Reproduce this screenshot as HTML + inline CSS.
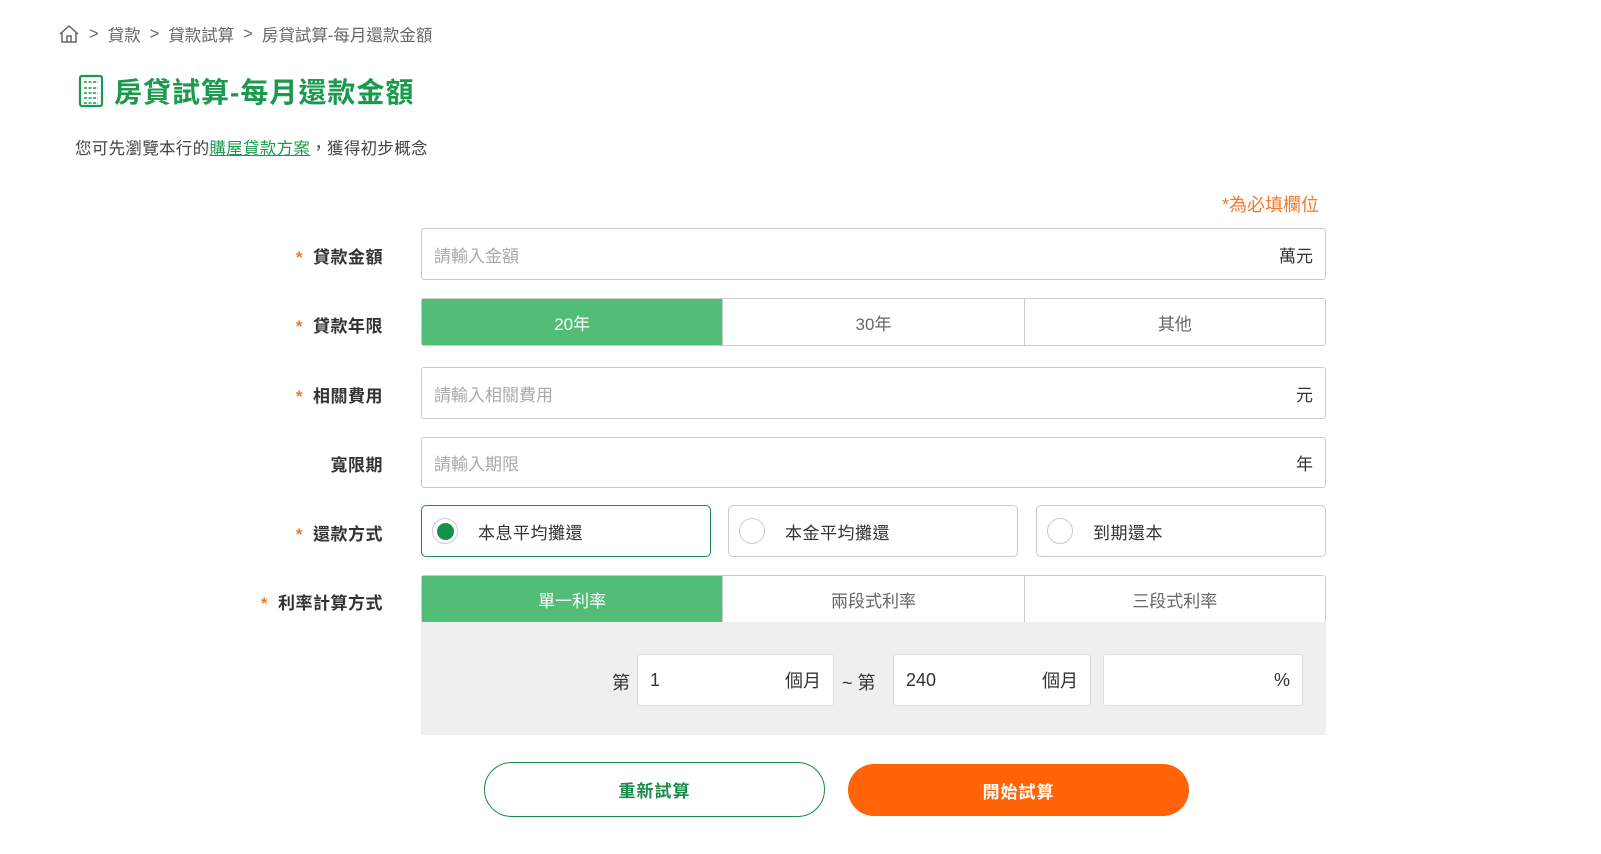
<!DOCTYPE html>
<html><head><meta charset="utf-8"><style>
*{box-sizing:border-box;margin:0;padding:0}
body{width:1601px;height:854px;background:#fff;font-family:"Liberation Sans","Noto Sans CJK TC",sans-serif;color:#333;position:relative;overflow:hidden}
.a{position:absolute}
.bc{left:58px;top:22px;font-size:16.5px;color:#666;display:flex;align-items:center;gap:9px}
.title{left:78px;top:71px;font-size:28px;font-weight:bold;color:#1a9a4e;display:flex;align-items:center;gap:10px;letter-spacing:1px}
.desc{left:75px;top:135px;font-size:16.5px;color:#444;letter-spacing:0.3px}
.desc u{color:#1a9a4e}
.req{left:1222px;top:191px;font-size:18px;color:#f07a2a}
.lbl{right:1218px;font-size:17px;font-weight:bold;color:#333;white-space:nowrap;letter-spacing:0.5px}
.lbl i{color:#f07a2a;font-style:normal;margin-right:10px}
.inp{left:421px;width:905px;height:52px;border:1px solid #ccc;border-radius:3px;display:flex;align-items:center;justify-content:space-between;padding:0 12px;font-size:17px;color:#aaa}
.inp span{color:#333}
.tabs{left:421px;width:905px;height:48px;border:1px solid #ccc;border-radius:3px;display:flex;font-size:17px;color:#666}
.tabs div{flex:1;display:flex;align-items:center;justify-content:center;border-left:1px solid #ccc}
.tabs div:first-child{border-left:none;background:#52bd77;color:#fff}
.rad{top:505px;width:290px;height:52px;border:1px solid #ccc;border-radius:5px;display:flex;align-items:center;padding-left:10px;font-size:17px;color:#333;letter-spacing:0.5px}
.rad b{width:26px;height:26px;border:1px solid #ccc;border-radius:50%;margin-right:20px;display:flex;align-items:center;justify-content:center}
.panel{left:421px;top:622px;width:905px;height:113px;background:#efefef}
.box{top:654px;height:52px;background:#fff;border:1px solid #ddd;border-radius:3px;display:flex;align-items:center;justify-content:space-between;padding:0 12px;font-size:18px;color:#333}
.t{top:669px;font-size:18px;color:#333}
.btn{top:762px;width:341px;height:55px;border-radius:28px;display:flex;align-items:center;justify-content:center;font-size:17px;font-weight:bold;letter-spacing:1px}
</style></head><body>
<div class="a bc"><svg width="22" height="22" viewBox="0 0 22 22" fill="none" stroke="#666" stroke-width="1.5"><path d="M2 11L11 3l9 8M4 9v10h14V9M9 19v-6h4v6"/></svg><span>&gt;</span><span>貸款</span><span>&gt;</span><span>貸款試算</span><span>&gt;</span><span>房貸試算-每月還款金額</span></div>
<div class="a title"><svg width="26" height="34" viewBox="0 0 26 34" fill="none" stroke="#1a9a4e" stroke-width="2.2"><rect x="2" y="2" width="22" height="30" rx="2"/><path d="M6 8h14M6 14h14M6 19h14M6 24h14M6 29h14" stroke-width="1.6" stroke-dasharray="3 1.5"/></svg>房貸試算-每月還款金額</div>
<div class="a desc">您可先瀏覽本行的<u>購屋貸款方案</u>，獲得初步概念</div>
<div class="a req">*為必填欄位</div>

<div class="a lbl" style="top:243px"><i>*</i>貸款金額</div>
<div class="a inp" style="top:228px">請輸入金額<span>萬元</span></div>
<div class="a lbl" style="top:312px"><i>*</i>貸款年限</div>
<div class="a tabs" style="top:298px"><div>20年</div><div>30年</div><div>其他</div></div>
<div class="a lbl" style="top:382px"><i>*</i>相關費用</div>
<div class="a inp" style="top:367px">請輸入相關費用<span>元</span></div>
<div class="a lbl" style="top:451px">寬限期</div>
<div class="a inp" style="top:437px;height:51px">請輸入期限<span>年</span></div>
<div class="a lbl" style="top:520px"><i>*</i>還款方式</div>
<div class="a rad" style="left:421px;border-color:#1a8a4a"><b><s style="width:17px;height:17px;border-radius:50%;background:#16914a;display:block"></s></b>本息平均攤還</div>
<div class="a rad" style="left:728px"><b></b>本金平均攤還</div>
<div class="a rad" style="left:1036px"><b></b>到期還本</div>
<div class="a lbl" style="top:589px"><i>*</i>利率計算方式</div>
<div class="a tabs" style="top:575px;border-bottom:none"><div>單一利率</div><div>兩段式利率</div><div>三段式利率</div></div>
<div class="a panel"></div>
<div class="a t" style="left:612px">第</div>
<div class="a box" style="left:637px;width:197px">1<span>個月</span></div>
<div class="a t" style="left:842px">~ 第</div>
<div class="a box" style="left:893px;width:198px">240<span>個月</span></div>
<div class="a box" style="left:1103px;width:200px;justify-content:flex-end">%</div>
<div class="a btn" style="left:484px;border:1.5px solid #1a8a4a;color:#1a8a4a">重新試算</div>
<div class="a btn" style="left:848px;background:#ff6409;color:#fff;height:52px;top:764px">開始試算</div>
</body></html>
